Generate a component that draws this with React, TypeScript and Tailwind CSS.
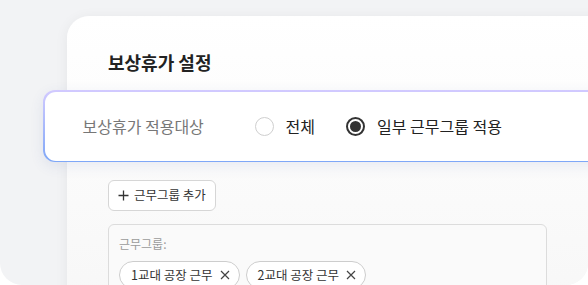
import React, { useState } from 'react';

const FONT = "font-['Noto_Sans_CJK_KR','Noto_Sans',sans-serif]";

const Radio = ({ checked, label, onClick }: { checked: boolean; label: string; onClick: () => void }) => (
  <button type="button" onClick={onClick} className="flex items-center gap-3">
    {checked ? (
      <span className="w-[19px] h-[19px] rounded-full border-2 border-[#333] flex items-center justify-center">
        <span className="w-[11px] h-[11px] rounded-full bg-[#333]"></span>
      </span>
    ) : (
      <span className="w-[19px] h-[19px] rounded-full border-[1.5px] border-[#cfcfcf] bg-white"></span>
    )}
    <span className="text-[16px] text-[#222]">{label}</span>
  </button>
);

const Chip = ({ label }: { label: string }) => (
  <span className="flex items-center gap-[7px] h-[28px] pl-[11px] pr-[9px] rounded-full border border-[#cdcdcd] bg-white text-[12.5px] text-[#333]">
    {label}
    <svg width="10" height="10" viewBox="0 0 10 10" className="text-[#444]">
      <path d="M1 1L9 9M9 1L1 9" stroke="currentColor" strokeWidth="1.2" />
    </svg>
  </span>
);

export default function App() {
  const [target, setTarget] = useState<'all' | 'some'>('some');
  const groups = ['1교대 공장 근무', '2교대 공장 근무'];

  return (
    <div className={`w-[588px] h-[285px] bg-white ${FONT}`}>
      <div className="w-[588px] h-[285px] bg-[#f2f3f5] rounded-b-[22px] overflow-hidden pt-[16px] pl-[67px]">
        <div className="w-[560px] h-[300px] rounded-tl-[22px] bg-gradient-to-b from-white to-[#f7f7f7] shadow-[0_2px_14px_rgba(0,0,0,0.06)] pt-[33px]">
          <h2 className="pl-[41px] text-[18px] font-bold text-[#222] leading-[26px]">보상휴가 설정</h2>

          <div className="-ml-[24px] mt-[15px] w-[600px] p-[1.5px] rounded-[12px] bg-gradient-to-b from-[#d2caff] to-[#7ea7f7] shadow-[0_4px_14px_rgba(60,80,160,0.10)]">
            <div className="h-[69px] rounded-[11px] bg-white flex items-center pl-[38px]">
              <span className="w-[172px] text-[16px] text-[#777]">보상휴가 적용대상</span>
              <div className="flex items-center gap-[31px]">
                <Radio checked={target === 'all'} label="전체" onClick={() => setTarget('all')} />
                <Radio checked={target === 'some'} label="일부 근무그룹 적용" onClick={() => setTarget('some')} />
              </div>
            </div>
          </div>

          <div className="pl-[41px] mt-[18px]">
            <button type="button" className="h-[31px] px-[9px] rounded-[6px] border border-[#d6d6d6] bg-white text-[12.5px] text-[#333] flex items-center gap-[5px]">
              <svg width="11" height="11" viewBox="0 0 11 11">
                <path d="M5.5 0.5V10.5M0.5 5.5H10.5" stroke="#333" strokeWidth="1.3" />
              </svg>
              근무그룹 추가
            </button>

            <div className="mt-[13px] w-[439px] h-[100px] rounded-[6px] border border-[#dcdcdc] bg-[#fafafa] pt-[10px] px-[10px]">
              <p className="text-[12px] text-[#9a9a9a]">근무그룹:</p>
              <div className="mt-[8px] flex gap-[6px]">
                {groups.map((g) => (
                  <Chip key={g} label={g} />
                ))}
              </div>
            </div>
          </div>
        </div>
      </div>
    </div>
  );
}
